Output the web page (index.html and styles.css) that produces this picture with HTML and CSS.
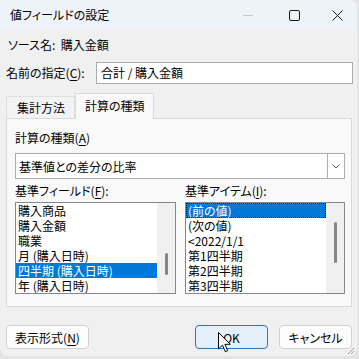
FILE: index.html
```html
<!DOCTYPE html>
<html lang="ja">

<head>
    <meta charset="UTF-8">
    <meta name="viewport" content="width=device-width, initial-scale=1.0">
    <title>値フィールドの設定</title>
    <link rel="stylesheet" href="styles.css">
</head>

<body>
    <div class="window">
        <header class="titlebar">
            <span class="title">値フィールドの設定</span>
            <div class="caption-buttons">
                <div class="caption-btn">
                    <svg width="10" height="10" viewBox="0 0 10 10"><path d="M0 5.5h10" stroke="#c4c8cc" stroke-width="1"/></svg>
                </div>
                <div class="caption-btn">
                    <svg width="11" height="11" viewBox="0 0 11 11"><rect x="0.5" y="0.5" width="10" height="10" rx="1.5" fill="none" stroke="#1a1a1a" stroke-width="1"/></svg>
                </div>
                <div class="caption-btn close">
                    <svg width="11" height="11" viewBox="0 0 11 11"><path d="M0.5 0.5l10 10M10.5 0.5l-10 10" stroke="#1a1a1a" stroke-width="1"/></svg>
                </div>
            </div>
        </header>

        <div class="content">
            <div class="source-row">ソース名:&nbsp; 購入金額</div>

            <div class="name-row">
                <span class="name-label">名前の指定(<u>C</u>):</span>
                <div class="textbox">合計 / 購入金額</div>
            </div>

            <div class="tab-strip">
                <div class="tab">集計方法</div>
                <div class="tab active">計算の種類</div>
            </div>
            <div class="tab-panel">
                <div class="field-label">計算の種類(<u>A</u>)</div>
                <div class="combobox">
                    <span class="combo-text">基準値との差分の比率</span>
                    <div class="combo-button">
                        <svg width="8" height="5" viewBox="0 0 8 5"><path d="M0.5 0.5l3.5 3.5 3.5-3.5" fill="none" stroke="#606060" stroke-width="1"/></svg>
                    </div>
                </div>

                <div class="list-columns">
                    <div class="list-column">
                        <div class="list-label">基準フィールド(<u>F</u>):</div>
                        <div class="listbox">
                            <ul class="list-items">
                                <li>購入商品</li>
                                <li>購入金額</li>
                                <li>職業</li>
                                <li>月 (購入日時)</li>
                                <li class="selected">四半期 (購入日時)</li>
                                <li>年 (購入日時)</li>
                            </ul>
                            <div class="scrollbar">
                                <div class="thumb thumb-left"></div>
                            </div>
                        </div>
                    </div>
                    <div class="list-column">
                        <div class="list-label">基準アイテム(<u>I</u>):</div>
                        <div class="listbox">
                            <ul class="list-items">
                                <li class="selected focused">(前の値)</li>
                                <li>(次の値)</li>
                                <li>&lt;2022/1/1</li>
                                <li>第1四半期</li>
                                <li>第2四半期</li>
                                <li>第3四半期</li>
                            </ul>
                            <div class="scrollbar">
                                <div class="thumb thumb-right"></div>
                            </div>
                        </div>
                    </div>
                </div>
            </div>

            <div class="button-row">
                <button class="btn format-btn">表示形式(<u>N</u>)</button>
                <div class="spacer"></div>
                <button class="btn default">OK</button>
                <button class="btn">キャンセル</button>
            </div>
        </div>

        <svg class="cursor" width="13" height="21" viewBox="0 0 13 21">
            <path d="M0.5 0.5v16.5l4-3.8 2.8 6.5 2.4-1-2.8-6.4h5.4z" fill="#fff" stroke="#000" stroke-width="1" stroke-linejoin="round"/>
        </svg>
        <svg class="grip" width="9" height="9" viewBox="0 0 9 9">
            <path d="M8 2l-6 6M8 5l-3 3" stroke="#a0a0a0" stroke-width="1"/>
        </svg>
    </div>
</body>

</html>
```

FILE: styles.css
```css
body {
    margin: 0;
    background-color: #e4e4e4;
    font-family: "Noto Sans CJK JP", "Noto Sans", sans-serif;
    font-size: 12px;
    font-feature-settings: "palt";
    color: #000;
}

.window {
    position: relative;
    width: 357px;
    height: 356px;
    background-color: #f0f0f0;
    border-radius: 0 8px 8px 8px;
    overflow: hidden;
    display: flex;
    flex-direction: column;
}

.titlebar {
    height: 30px;
    flex-shrink: 0;
    background-color: #eef3f9;
    display: flex;
    align-items: center;
    padding-left: 10px;
}

.title {
    line-height: 18px;
}

.caption-buttons {
    margin-left: auto;
    display: flex;
    height: 100%;
}

.caption-btn {
    width: 46px;
    display: flex;
    align-items: center;
    justify-content: center;
}

.caption-btn.close {
    width: 40px;
}

.content {
    padding: 0 4px 0 6px;
    display: flex;
    flex-direction: column;
}

u {
    text-decoration-thickness: 1px;
    text-underline-offset: 2px;
}

.source-row {
    margin-top: 6px;
    padding-left: 2px;
    line-height: 18px;
}

.name-row {
    margin-top: 8px;
    display: flex;
    align-items: center;
}

.name-label {
    width: 90px;
    line-height: 18px;
}

.textbox {
    flex: 1;
    height: 20px;
    line-height: 20px;
    background-color: #fff;
    border: 1px solid #ababab;
    padding-left: 4px;
}

.tab-strip {
    margin-top: 9px;
    height: 25px;
    display: flex;
    align-items: flex-end;
}

.tab {
    height: 21px;
    line-height: 21px;
    padding: 0 9px 0 10px;
    background-color: #f3f3f3;
    border: 1px solid #e0e0e0;
    border-bottom: none;
}

.tab.active {
    height: 25px;
    line-height: 24px;
    padding: 0 8px 0 9px;
    background-color: #f9f9f9;
    border-color: #d9d9d9;
    position: relative;
    top: 1px;
    z-index: 1;
}

.tab-panel {
    margin-right: 1px;
    background-color: #f9f9f9;
    border: 1px solid #d9d9d9;
    padding: 10px 6px 12px 8px;
}

.field-label,
.list-label {
    line-height: 18px;
}

.combobox {
    margin-top: 6px;
    height: 24px;
    background-color: #fff;
    border: 1px solid #adadad;
    display: flex;
    align-items: center;
}

.combo-text {
    padding-left: 3px;
    flex: 1;
}

.combo-button {
    width: 16px;
    height: 100%;
    border-left: 1px solid #adadad;
    display: flex;
    align-items: center;
    justify-content: center;
}

.list-columns {
    margin-top: 3px;
    display: grid;
    grid-template-columns: 161px 1fr;
    gap: 9px;
}

.list-label {
    margin-bottom: 2px;
}

.listbox {
    height: 90px;
    background-color: #fff;
    border: 1px solid #828790;
    display: flex;
    overflow: hidden;
}

.list-items {
    list-style: none;
    margin: 0;
    padding: 0;
    flex: 1;
}

.list-items li {
    height: 15px;
    line-height: 15px;
    padding-left: 2px;
    white-space: nowrap;
}

.list-items li.selected {
    background-color: #0078d7;
    color: #fff;
}

.list-items li.focused {
    outline: 1px dotted #1a1a1a;
    outline-offset: -1px;
}

.scrollbar {
    width: 18px;
    background-color: #f0f0f0;
    position: relative;
}

.thumb {
    position: absolute;
    left: 8px;
    width: 3px;
    border-radius: 2px;
    background-color: #858585;
}

.thumb-left {
    top: 50px;
    height: 22px;
}

.thumb-right {
    top: 19px;
    height: 41px;
}

.button-row {
    margin-top: 18px;
    margin-right: 1px;
    display: flex;
    gap: 11px;
}

.spacer {
    flex: 1;
}

.btn {
    font-family: inherit;
    font-size: 12px;
    font-feature-settings: "palt";
    color: #000;
    width: 73px;
    height: 24px;
    padding: 0;
    background-color: #fdfdfd;
    border: 1px solid #d0d0d0;
    border-radius: 4px;
}

.btn.format-btn {
    width: 83px;
}

.btn.default {
    background-color: #e3eff9;
    border-color: #2a77c9;
}

.cursor {
    position: absolute;
    left: 218px;
    top: 332px;
}

.grip {
    position: absolute;
    right: 2px;
    bottom: 1px;
}
```
